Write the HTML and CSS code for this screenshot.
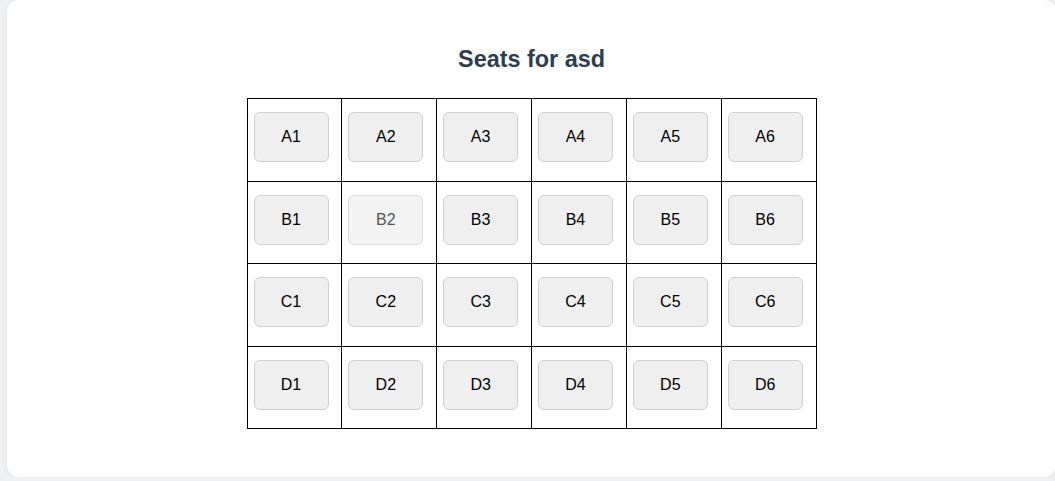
FILE: index.html
```html
<!DOCTYPE html>
<html lang="en">
<head>
    <meta charset="UTF-8">
    <meta name="viewport" content="width=device-width, initial-scale=1.0">
    <title>Seats</title>
    <link rel="stylesheet" href="styles.css">
</head>
<body>
    <div class="card">
        <h2 class="title">Seats for asd</h2>
        <table class="seat-table">
            <tr>
                <td><button class="seat">A1</button></td>
                <td><button class="seat">A2</button></td>
                <td><button class="seat">A3</button></td>
                <td><button class="seat">A4</button></td>
                <td><button class="seat">A5</button></td>
                <td><button class="seat">A6</button></td>
            </tr>
            <tr>
                <td><button class="seat">B1</button></td>
                <td><button class="seat" disabled>B2</button></td>
                <td><button class="seat">B3</button></td>
                <td><button class="seat">B4</button></td>
                <td><button class="seat">B5</button></td>
                <td><button class="seat">B6</button></td>
            </tr>
            <tr>
                <td><button class="seat">C1</button></td>
                <td><button class="seat">C2</button></td>
                <td><button class="seat">C3</button></td>
                <td><button class="seat">C4</button></td>
                <td><button class="seat">C5</button></td>
                <td><button class="seat">C6</button></td>
            </tr>
            <tr>
                <td><button class="seat">D1</button></td>
                <td><button class="seat">D2</button></td>
                <td><button class="seat">D3</button></td>
                <td><button class="seat">D4</button></td>
                <td><button class="seat">D5</button></td>
                <td><button class="seat">D6</button></td>
            </tr>
        </table>
    </div>
</body>
</html>
```

FILE: styles.css
```css
body {
    font-family: Arial, "Liberation Sans", sans-serif;
    margin: 0;
    padding: 0 0 0 7px;
    background-color: #eef0f2;
    overflow: hidden;
}
.card {
    box-sizing: border-box;
    width: 1049px;
    height: 477px;
    background-color: white;
    border-radius: 12px;
    box-shadow: 0 2px 6px rgba(0, 0, 0, 0.06);
    padding-top: 45px;
}
.title {
    margin: 0 0 25px;
    font-size: 23.4px;
    line-height: 28px;
    text-align: center;
    color: #2c3e50;
}
.seat-table {
    margin: 0 auto;
    width: 570px;
    border-collapse: collapse;
    table-layout: fixed;
}
.seat-table td {
    border: 1px solid black;
    height: 82.5px;
    box-sizing: border-box;
    padding: 13px 0 0 6px;
    vertical-align: top;
}
.seat {
    display: block;
    width: 75px;
    height: 50px;
    font-family: Arial, "Liberation Sans", sans-serif;
    font-size: 16px;
    color: black;
    background-color: #efefef;
    border: 1px solid #cfcfcf;
    border-radius: 6px;
    cursor: pointer;
}
.seat:disabled {
    color: #555555;
    background-color: #f3f3f3;
    border-color: #dcdcdc;
    cursor: not-allowed;
}
```
